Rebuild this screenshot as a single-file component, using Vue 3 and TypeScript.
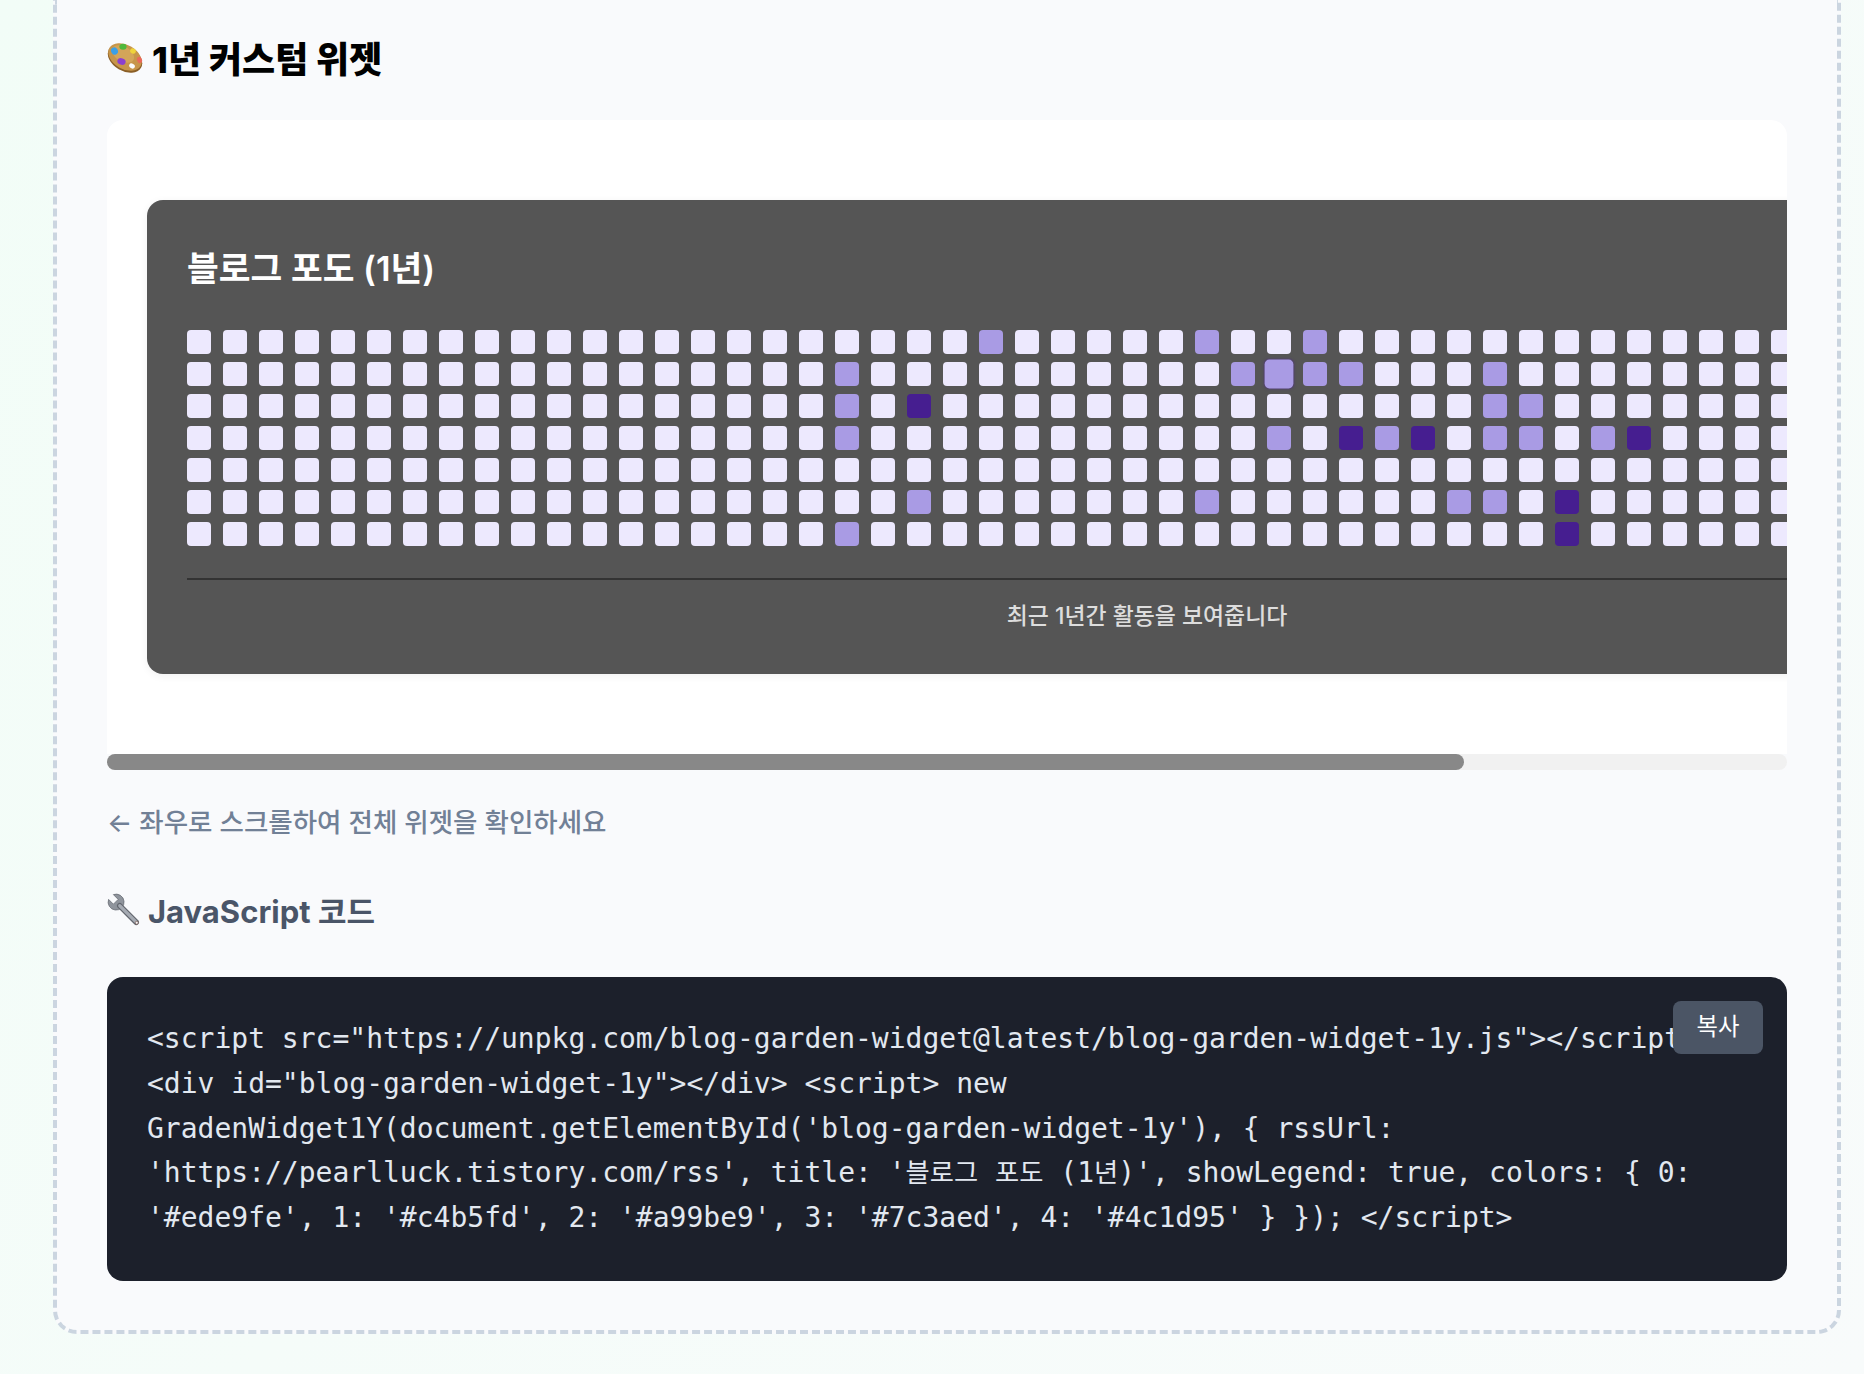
<script setup lang="ts">
const COLS = 53;
const ROWS = 7;
const medium: Record<number, number[]> = {
  18: [1, 2, 3, 6], 20: [5], 22: [0], 28: [0, 5], 29: [1], 30: [3], 31: [0, 1],
  32: [1], 33: [3], 35: [5], 36: [1, 2, 3, 5], 37: [2, 3], 39: [3],
};
const dark: Record<number, number[]> = { 20: [2], 32: [3], 34: [3], 38: [5, 6], 40: [3] };

type Cell = { key: string; level: string };
const cells: Cell[] = [];
for (let c = 0; c < COLS; c++) {
  for (let r = 0; r < ROWS; r++) {
    let level = "l0";
    if (medium[c]?.includes(r)) level = "l2";
    if (dark[c]?.includes(r)) level = "l4";
    if (c === 30 && r === 1) level = "l2 hover";
    cells.push({ key: `${c}-${r}`, level });
  }
}
</script>

<template>
  <div class="page">
    <section class="box">
      <h2 class="h1">
        <svg class="emoji palette" viewBox="0 0 36 33" aria-hidden="true">
          <ellipse cx="18" cy="17.500" rx="18.500" ry="12.500" transform="rotate(30 18 17.500)" fill="#8a5e26" />
          <ellipse cx="18" cy="16" rx="18" ry="12" transform="rotate(30 18 16)" fill="#c7954a" />
          <ellipse cx="16" cy="13" rx="12" ry="7.500" transform="rotate(30 16 13)" fill="#d3a559" />
          <ellipse cx="7.500" cy="10" rx="3.300" ry="3.800" transform="rotate(-30 7.500 10)" fill="#3a9fe6" />
          <ellipse cx="16" cy="5.800" rx="3.600" ry="3" fill="#4fb83c" />
          <ellipse cx="26" cy="10" rx="2.900" ry="2.600" transform="rotate(30 26 10)" fill="#efd33a" />
          <ellipse cx="32.500" cy="19" rx="2.500" ry="3.200" transform="rotate(-20 32.500 19)" fill="#e9695a" />
          <ellipse cx="14.500" cy="20.500" rx="4.200" ry="3.300" transform="rotate(20 14.500 20.500)" fill="#8b3fd0" />
          <ellipse cx="25" cy="25" rx="3" ry="2.300" transform="rotate(30 25 25)" fill="#fbfbfb" />
        </svg>
        <span>1년 커스텀 위젯</span>
      </h2>

      <div class="scroller">
        <div class="track">
          <div class="widget">
            <h3 class="w-title">블로그 포도 (1년)</h3>
            <div class="grid">
              <i v-for="cell in cells" :key="cell.key" class="cell" :class="cell.level"></i>
            </div>
            <div class="w-foot">최근 1년간 활동을 보여줍니다</div>
          </div>
        </div>
      </div>
      <div class="bar"><div class="thumb"></div></div>

      <p class="hint">← 좌우로 스크롤하여 전체 위젯을 확인하세요</p>

      <h3 class="h2">
        <svg class="emoji wrench" viewBox="0 0 32 32" aria-hidden="true">
          <path d="M6 1.500 10.500 6 6 10.500 1.500 6A7.500 7.500 0 1 0 6 1.500z" fill="#8f949c" stroke="#62666e" stroke-width=".7" stroke-linejoin="round" />
          <path d="M12 12 27.500 27.500" stroke="#62666e" stroke-width="5.200" stroke-linecap="round" />
          <path d="M12 12 27.500 27.500" stroke="#a6abb3" stroke-width="3" stroke-linecap="round" />
          <circle cx="28" cy="28" r="1.400" fill="#f5f5f5" stroke="#7a5a52" stroke-width=".7" />
        </svg>
        <span>JavaScript 코드</span>
      </h3>

      <div class="code">
        <button class="copy" type="button">복사</button>
        <div class="pre">
          <div class="ln">&lt;script src="https://unpkg.com/blog-garden-widget@latest/blog-garden-widget-1y.js"&gt;&lt;/script&gt;</div>
          <div class="ln">&lt;div id="blog-garden-widget-1y"&gt;&lt;/div&gt; &lt;script&gt; new</div>
          <div class="ln">GradenWidget1Y(document.getElementById('blog-garden-widget-1y'), { rssUrl:</div>
          <div class="ln">'https://pearlluck.tistory.com/rss', title: '<span class="ko">블로그</span> <span class="ko">포도</span> (1<span class="ko">년</span>)', showLegend: true, colors: { 0:</div>
          <div class="ln">'#ede9fe', 1: '#c4b5fd', 2: '#a99be9', 3: '#7c3aed', 4: '#4c1d95' } }); &lt;/script&gt;</div>
        </div>
      </div>
    </section>
  </div>
</template>

<style scoped>
.page {
  width: 1864px;
  height: 1374px;
  overflow: hidden;
  box-sizing: border-box;
  padding: 0 23px 40px 53px;
  background: linear-gradient(135deg, #f2fdf7 0%, #f8fbfb 100%);
  font-family: Inter, "Noto Sans CJK KR", sans-serif;
}
.box {
  box-sizing: border-box;
  height: 1334px;
  padding: 33px 50px 50px;
  background: #f9fafc;
  border: 4px dashed #cbd5e0;
  border-top: 0;
  border-radius: 0 0 24px 24px;
}
.h1 {
  margin: 0 0 39px;
  display: flex;
  align-items: center;
  gap: 9px;
  height: 48px;
  font-size: 36px;
  font-weight: 800;
  color: #000;
}
.emoji { flex: none; display: block; }
.palette { width: 36px; height: 33px; }
.wrench { width: 34px; height: 34px; position: relative; top: 1px; }
.scroller {
  overflow: hidden;
  background: #fff;
  border-radius: 16px 16px 0 0;
}
.bar {
  height: 16px;
  background: #f1f1f1;
  border-radius: 8px;
}
.thumb {
  width: 1357px;
  height: 16px;
  background: #888;
  border-radius: 8px;
}
.track {
  box-sizing: border-box;
  width: 2080px;
  padding: 80px 40px;
}
.widget {
  box-sizing: border-box;
  height: 474px;
  padding: 40px;
  background: #555;
  border-radius: 16px;
  color: #fff;
  box-shadow: 0 2px 8px rgba(0, 0, 0, 0.06);
}
.w-title {
  margin: 0 0 32px;
  height: 58px;
  line-height: 58px;
  font-size: 34.500px;
  font-weight: 600;
}
.grid {
  display: grid;
  grid-template-rows: repeat(7, 24px);
  grid-auto-flow: column;
  grid-auto-columns: 24px;
  gap: 8px 12px;
}
.cell {
  display: block;
  width: 24px;
  height: 24px;
  border-radius: 4px;
}
.l0 { background: #ede9fe; }
.l2 { background: #a99be4; }
.l4 { background: #461e90; }
.hover {
  transform: scale(1.2);
  box-shadow: 0 0 2px rgba(76, 29, 149, 0.5);
}
.w-foot {
  margin-top: 32px;
  padding-top: 16px;
  border-top: 2px solid #333;
  text-align: center;
  font-size: 22.900px;
  font-weight: 500;
  line-height: 40px;
  color: #ddd;
}
.hint {
  margin: 32px 0 0;
  font-size: 26.500px;
  font-weight: 500;
  line-height: 40px;
  color: #718096;
}
.h2 {
  margin: 45px 0 0;
  display: flex;
  align-items: center;
  gap: 7px;
  height: 44px;
  font-size: 31px;
  font-weight: 700;
  color: #4a5568;
}
.code {
  position: relative;
  box-sizing: border-box;
  margin-top: 46px;
  padding: 40px;
  background: #1c202b;
  border-radius: 16px;
}
.pre {
  font-family: "DejaVu Sans Mono", "Noto Sans CJK KR", monospace;
  font-size: 28px;
  line-height: 44.800px;
  color: #e2e8f0;
}
.ln {
  white-space: pre;
  overflow: hidden;
}
.ko { font-size: 26.300px; }
.copy {
  position: absolute;
  top: 24px;
  right: 24px;
  z-index: 1;
  width: 90px;
  height: 53px;
  padding: 0 0 6px;
  border: 0;
  border-radius: 8px;
  background: #4b5565;
  color: #fff;
  font-family: Inter, "Noto Sans CJK KR", sans-serif;
  font-size: 23.300px;
}
</style>

<style>
body { margin: 0; }
</style>
